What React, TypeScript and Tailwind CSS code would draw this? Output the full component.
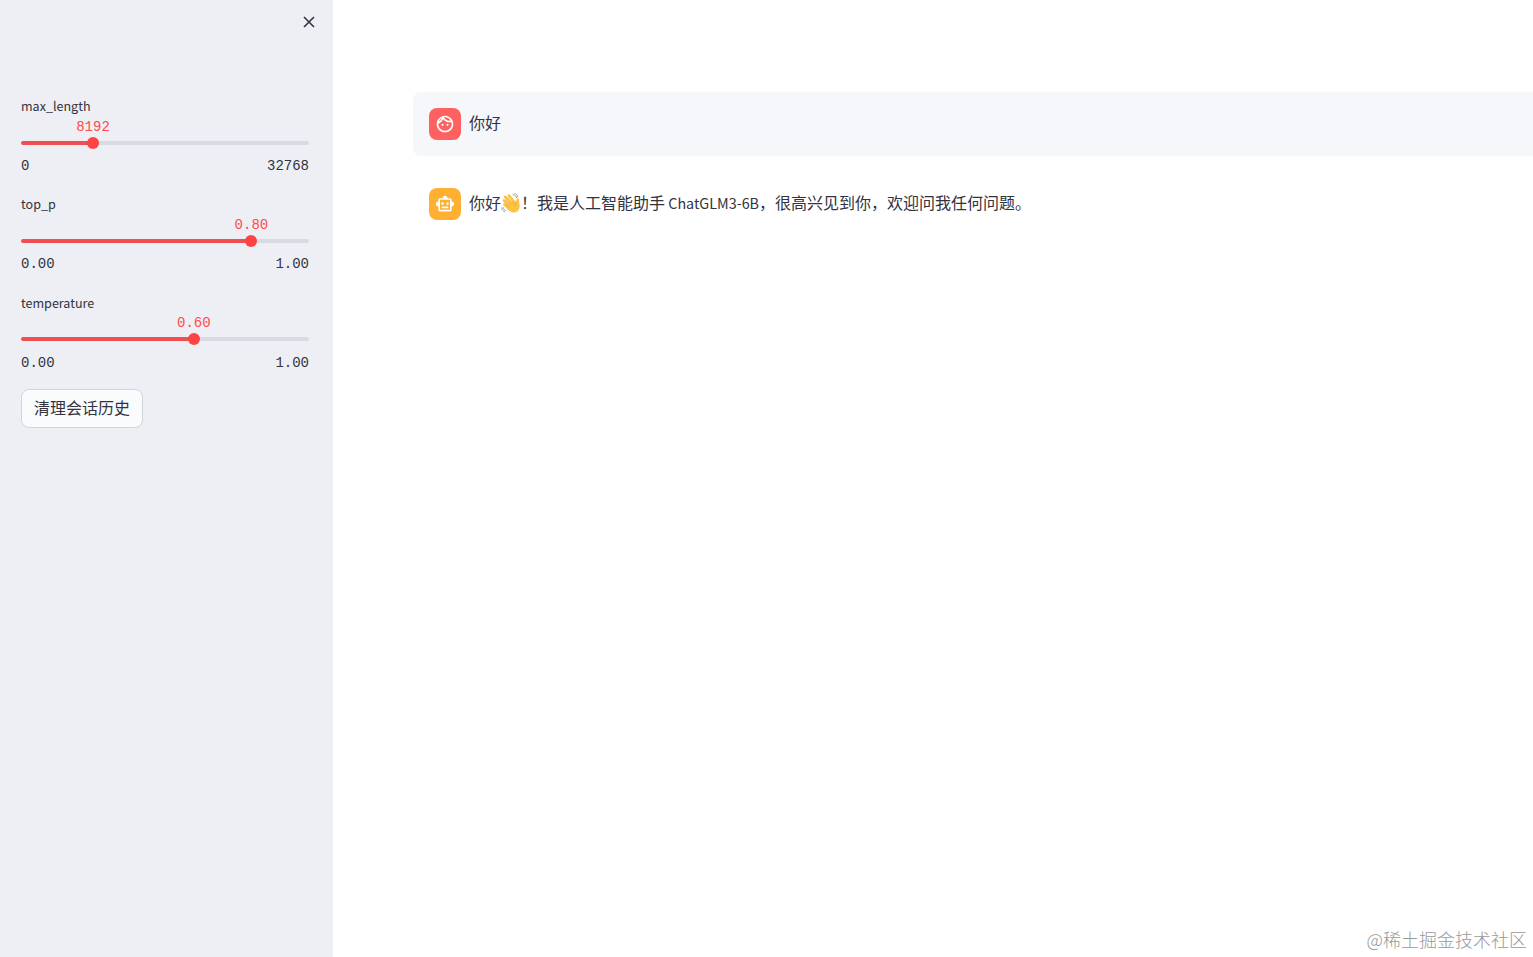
import React from 'react'
import { MdOutlineFace, MdOutlineSmartToy } from 'react-icons/md'

const sliders = [
  { label: 'max_length', value: '8192', min: '0', max: '32768', percent: 25 },
  { label: 'top_p', value: '0.80', min: '0.00', max: '1.00', percent: 80 },
  { label: 'temperature', value: '0.60', min: '0.00', max: '1.00', percent: 60 },
]

type SliderProps = {
  label: string
  value: string
  min: string
  max: string
  percent: number
}

const Slider = ({ label, value, min, max, percent }: SliderProps) => {
  return (
    <div className="h-[82.4px]">
      <div className="h-[20.6px] text-[12.55px] leading-[19px]">{label}</div>
      <div className="h-5 font-['Liberation_Mono',monospace] text-sm leading-5 text-[#ff4b4b]">
        <div className="w-fit -translate-x-1/2" style={{ marginLeft: `${percent}%` }}>{value}</div>
      </div>
      <div className="flex h-3 items-center">
        <div className="h-1 rounded-l-full bg-[#ef4f50]" style={{ width: `${percent}%` }}></div>
        <div className="z-10 -mx-1.5 size-3 shrink-0 rounded-full bg-[#ff4343]"></div>
        <div className="h-1 flex-1 rounded-r-full bg-[#d9dbe3]"></div>
      </div>
      <div className="mt-[7.4px] flex justify-between font-['Liberation_Mono',monospace] text-sm leading-5">
        <span>{min}</span>
        <span>{max}</span>
      </div>
    </div>
  )
}

const Wave = () => {
  return (
    <svg className="mt-1 h-[22px] w-5" viewBox="0 0 20 22" fill="none" strokeLinecap="round">
      <g stroke="#fcc43f" strokeWidth="2.6">
        <path d="M3 8.5l7 7" />
        <path d="M4.2 4.8l7 8" />
        <path d="M8 3.5l6.5 8" />
        <path d="M3.3 12.5l6 5" />
        <path d="M16.7 7.5l.5 6" />
      </g>
      <path d="M7.5 10.5l6.5-1.5 2.5 3c2-.5 2.5 2 1.8 4.500-.9 3.500-4 4.500-7 3.800-2-.5-4.500-2.500-6-4.300z" fill="#fcc43f" />
      <path d="M4.5 8l5.7 5.5M6.7 5l5.5 6.5M4.5 12l4.5 4M15.3 9c.2 2-1.3 3-1.3 5.5" stroke="#e59a2b" strokeWidth=".6" />
      <path d="M12 2.5c2 .5 3 1.6 3.8 3.3M13.8 1.5c1.6.6 2.5 1.6 3 3.2M.7 16c.3 2 1.4 3 3 3.800M2 15.500c.5 1.500 1.300 2.300 2.600 3" stroke="#7f8a90" strokeWidth=".8" />
    </svg>
  )
}

const App = () => {
  return (
    <div className="flex h-screen overflow-hidden bg-white font-['Noto_Sans_CJK_SC',sans-serif] text-[#31333f]">
      <aside className="w-[333px] shrink-0 bg-[#eeeff4] pr-6 pl-[21px]">
        <div className="-mr-1.5 flex h-24 justify-end pt-4">
          <button className="size-3">
            <svg className="size-3" viewBox="0 0 12 12" stroke="#31333f" strokeWidth="1.6">
              <path d="M1 1l10 10M11 1L1 11" />
            </svg>
          </button>
        </div>
        <div className="flex flex-col gap-4">
          {sliders.map((slider) => (
            <Slider key={slider.label} {...slider} />
          ))}
        </div>
        <button className="mt-[13.8px] h-[39px] w-[122px] rounded-lg border border-[#d3d4db] bg-[#fafbfd] pb-0.5 text-base leading-none">
          清理会话历史
        </button>
      </aside>

      <main className="flex min-w-0 flex-1 flex-col pt-[92px] pl-20">
        <div className="flex h-16 items-start gap-2 rounded-l-lg bg-[#f6f7fb] p-4">
          <div className="flex size-8 shrink-0 items-center justify-center rounded-lg bg-[#ff6060] text-white">
            <MdOutlineFace size={20} />
          </div>
          <p className="text-base leading-7">你好</p>
        </div>
        <div className="mt-4 flex h-16 items-start gap-2 p-4">
          <div className="flex size-8 shrink-0 items-center justify-center rounded-lg bg-[#ffb032] text-white">
            <MdOutlineSmartToy size={20} />
          </div>
          <p className="flex text-base leading-7 whitespace-pre">
            你好<Wave />！我是人工智能助手<span className="pt-px text-[14.35px]"> ChatGLM3-6B</span>，很高兴见到你，欢迎问我任何问题。
          </p>
        </div>
        <footer className="mt-auto flex h-8 justify-end pr-1.5 text-lg leading-7 font-light text-[#999]">
          @稀土掘金技术社区
        </footer>
      </main>
    </div>
  )
}

export default App
